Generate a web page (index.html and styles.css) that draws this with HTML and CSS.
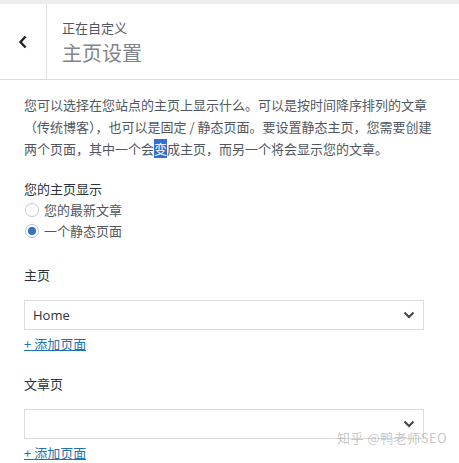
FILE: index.html
```html
<!DOCTYPE html>
<html lang="zh-CN">
<head>
<meta charset="utf-8">
<link rel="stylesheet" href="styles.css">
</head>
<body>
<div class="topstrip"></div>
<header class="header">
  <button class="back" aria-label="返回">
    <svg width="10" height="14" viewBox="0 0 10 14"><path d="M7.5 1.5 L2.5 7 L7.5 12.5" fill="none" stroke="#222" stroke-width="2.4"/></svg>
  </button>
  <div class="titles">
    <div class="sub">正在自定义</div>
    <div class="title">主页设置</div>
  </div>
</header>
<main class="content">
  <p class="desc">您可以选择在您站点的主页上显示什么。可以是按时间降序排列的文章（传统博客），也可以是固定 / 静态页面。要设置静态主页，您需要创建两个页面，其中一个会<span class="sel">变</span>成主页，而另一个将会显示您的文章。</p>
  <div class="group">
    <div class="label">您的主页显示</div>
    <label class="radio"><span class="circle"></span>您的最新文章</label>
    <label class="radio"><span class="circle checked"></span>一个静态页面</label>
  </div>
  <div class="field">
    <div class="label">主页</div>
    <div class="select"><span>Home</span><svg class="chev" width="12" height="8" viewBox="0 0 12 8"><path d="M1.5 1.5 L6 6 L10.5 1.5" fill="none" stroke="#444" stroke-width="2"/></svg></div>
    <a class="add" href="#">+ 添加页面</a>
  </div>
  <div class="field">
    <div class="label">文章页</div>
    <div class="select"><span></span><svg class="chev" width="12" height="8" viewBox="0 0 12 8"><path d="M1.5 1.5 L6 6 L10.5 1.5" fill="none" stroke="#444" stroke-width="2"/></svg></div>
    <a class="add" href="#">+ 添加页面</a>
  </div>
</main>
<div class="watermark">知乎 @鸭老师SEO</div>
</body>
</html>
```

FILE: styles.css
```css
html, body {
  margin: 0;
  padding: 0;
  background: #fff;
  font-family: "Open Sans", "Noto Sans CJK SC", sans-serif;
  color: #3c434a;
}
.topstrip {
  height: 4px;
  background: #ececec;
}
.header {
  display: flex;
  height: 75px;
  border-bottom: 1px solid #dcdcde;
  background: #fff;
}
.back {
  width: 47px;
  border: 0;
  border-right: 1px solid #e2e2e2;
  background: #fff;
  padding: 0;
  display: flex;
  align-items: center;
  justify-content: center;
}
.titles {
  padding: 15px 0 0 15px;
  font-family: "Noto Sans CJK SC", sans-serif;
}
.sub {
  font-size: 13px;
  line-height: 18px;
  color: #50575e;
}
.title {
  font-size: 20px;
  line-height: 28px;
  color: #80858a;
  margin-top: 2px;
}
.content {
  padding: 0 22px 0 24px;
  font-family: "Noto Sans CJK SC", sans-serif;
  font-size: 13px;
  color: #3c434a;
}
.desc {
  margin: 14px 0 0;
  line-height: 22px;
  color: #50575e;
}
.sel {
  background: #2f6fd6;
  color: #fff;
}
.group {
  margin-top: 19px;
}
.label {
  line-height: 20px;
  color: #2c3338;
}
.radio {
  display: flex;
  align-items: center;
  line-height: 21px;
  color: #50575e;
}
.circle {
  width: 14px;
  height: 14px;
  border: 1px solid #c8c8c8;
  border-radius: 50%;
  margin: 0 5px 0 1px;
  box-sizing: border-box;
  display: flex;
  align-items: center;
  justify-content: center;
  background: #fff;
}
.circle.checked {
  border-color: #b8c7dc;
}
.circle.checked::after {
  content: "";
  width: 8px;
  height: 8px;
  border-radius: 50%;
  background: #3a6fc4;
}
.field {
  margin-top: 24px;
}
.field + .field {
  margin-top: 20px;
}
.field .label {
  margin-bottom: 15px;
}
.select {
  height: 28px;
  margin-right: 13px;
  border: 1px solid #dcdcde;
  display: flex;
  align-items: center;
  justify-content: space-between;
  padding: 0 8px;
  font-family: "Open Sans", sans-serif;
  font-size: 13px;
  color: #2c3338;
}
.add {
  display: inline-block;
  margin-top: 4px;
  color: #2271b1;
  text-decoration: underline;
  line-height: 20px;
}
.watermark {
  position: absolute;
  left: 337px;
  top: 428px;
  font-family: "Noto Sans CJK SC", sans-serif;
  font-size: 13px;
  color: rgba(150, 150, 150, 0.55);
  letter-spacing: 0.5px;
}
```
